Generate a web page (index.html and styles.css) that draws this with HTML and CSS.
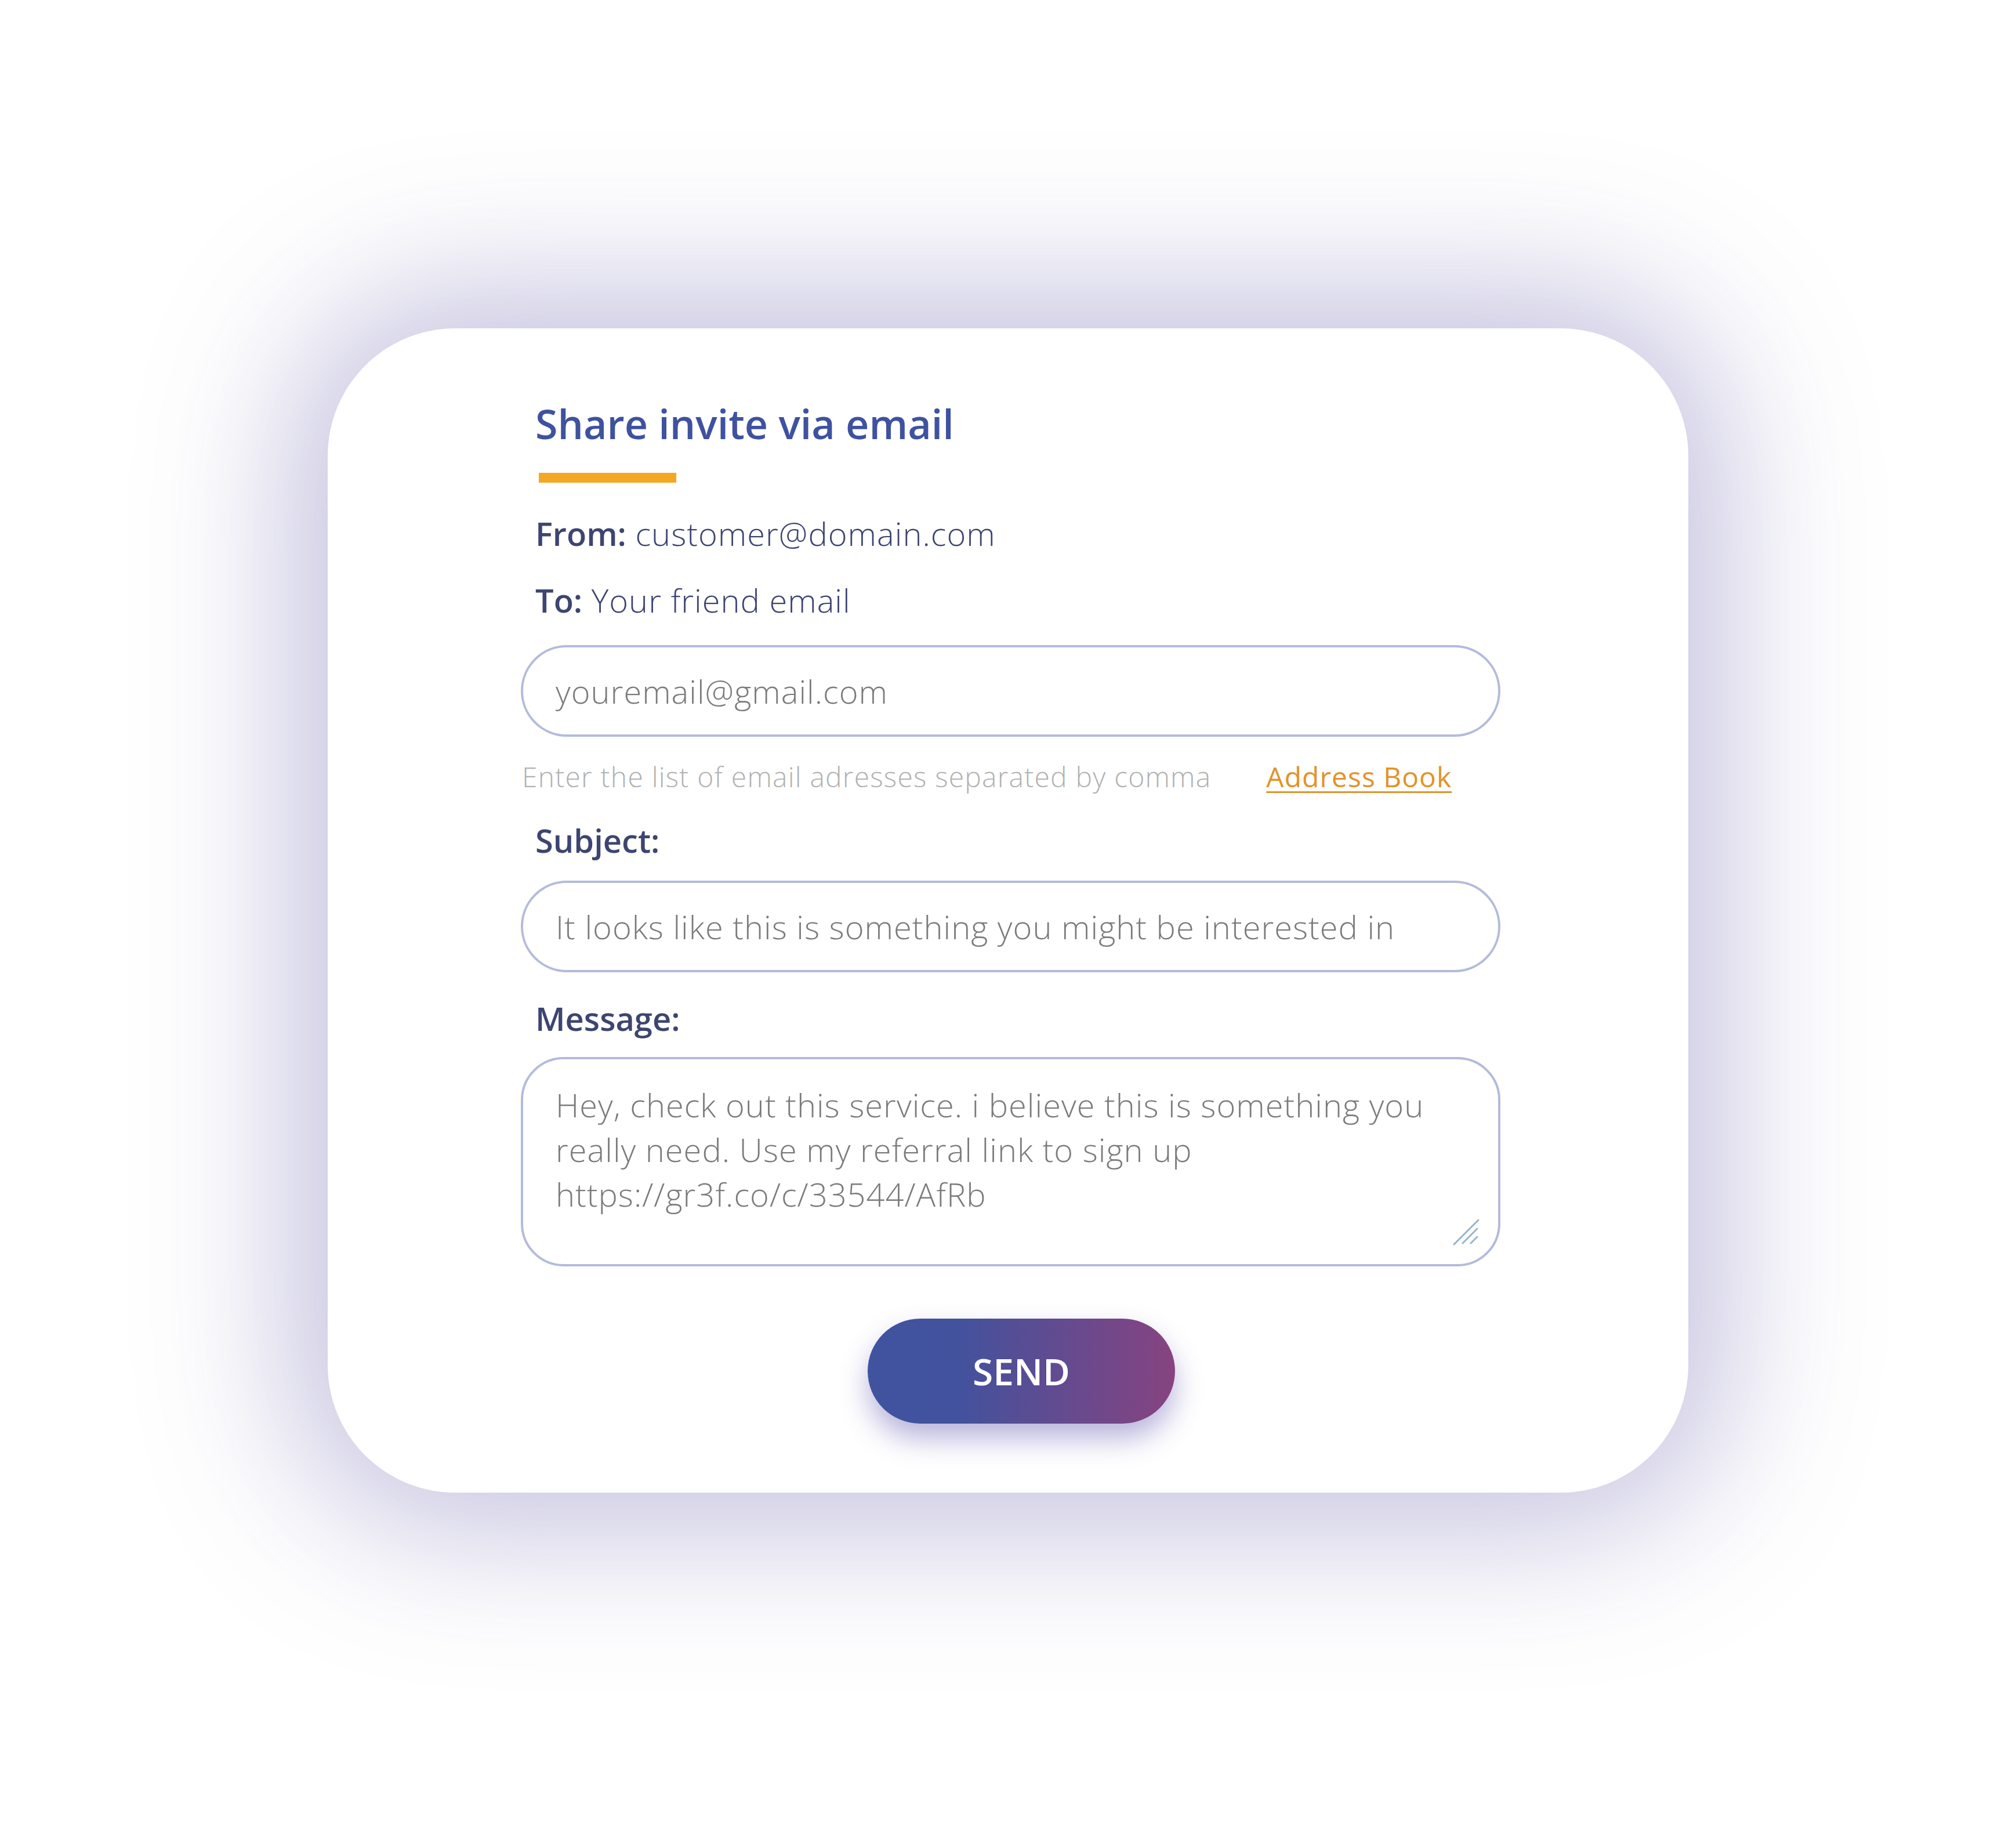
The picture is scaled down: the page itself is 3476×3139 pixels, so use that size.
FILE: index.html
```html
<!DOCTYPE html>
<html lang="en">
<head>
<meta charset="utf-8">
<title>Share invite via email</title>
<link rel="stylesheet" href="styles.css">
</head>
<body>
<main class="stage">
  <section class="card">
    <form class="form" onsubmit="return false">
      <h1 class="title">Share invite via email</h1>
      <div class="accent"></div>
      <p class="meta meta-from"><span class="meta-label">From:</span> customer@domain.com</p>
      <p class="meta meta-to"><span class="meta-label">To:</span> Your friend email</p>
      <input class="field field-to" type="text" placeholder="youremail@gmail.com">
      <div class="hint-row">
        <span class="hint">Enter the list of email adresses separated by comma</span>
        <a class="book-link" href="#">Address Book</a>
      </div>
      <label class="label label-subject">Subject:</label>
      <input class="field field-subject" type="text" value="It looks like this is something you might be interested in">
      <label class="label label-message">Message:</label>
      <div class="area-wrap">
        <textarea class="area">Hey, check out this service. i believe this is something you
really need. Use my referral link to sign up
https://gr3f.co/c/33544/AfRb</textarea>
        <svg class="grip" width="48" height="48" viewBox="0 0 48 48" aria-hidden="true">
          <line x1="2" y1="44" x2="44" y2="2"/>
          <line x1="17" y1="42" x2="42" y2="17"/>
          <line x1="31" y1="42" x2="42" y2="31"/>
        </svg>
      </div>
      <button class="send" type="submit">SEND</button>
    </form>
  </section>
</main>
</body>
</html>
```

FILE: styles.css
```css
html, body {
  margin: 0;
  padding: 0;
  background: #ffffff;
}

body {
  font-family: "Open Sans", "Noto Sans", "Liberation Sans", sans-serif;
}

.stage {
  min-height: 3139px;
  display: flex;
  align-items: center;
  justify-content: center;
}

.card {
  width: 2346px;
  box-sizing: border-box;
  padding: 129px 324px 119px 333px;
  background: #ffffff;
  border-radius: 220px;
  box-shadow: 0 0 420px 60px rgba(90, 80, 160, 0.36);
}

.form {
  display: flex;
  flex-direction: column;
  align-items: stretch;
}

.title {
  margin: 0 0 0 25px;
  font-size: 70px;
  line-height: 70px;
  font-weight: 600;
  color: #3f52a0;
}

.accent {
  margin: 50px 0 0 31px;
  width: 237px;
  height: 17px;
  background: #f5a623;
}

.meta {
  margin: 59px 0 0 25px;
  font-family: "Open Sans", "Noto Sans", sans-serif;
  font-size: 56px;
  line-height: 56px;
  font-weight: 300;
  letter-spacing: 1px;
  color: #3d4570;
}

.meta-label {
  font-weight: 600;
  letter-spacing: 0;
}

.field {
  box-sizing: border-box;
  width: 100%;
  height: 158px;
  margin: 0;
  padding: 0 56px;
  border: 4px solid #b4bbdb;
  border-radius: 79px;
  background: #ffffff;
  font-family: "Open Sans", "Noto Sans", sans-serif;
  font-size: 56px;
  font-weight: 300;
  letter-spacing: 1px;
  color: #7b7b7b;
  outline: none;
}

.field::placeholder {
  color: #7b7b7b;
  opacity: 1;
}

.field-to {
  margin-top: 50px;
}

.hint-row {
  display: flex;
  align-items: baseline;
  gap: 95px;
  margin: 45px 0 0 2px;
  font-size: 48px;
  line-height: 48px;
}

.hint {
  font-weight: 300;
  letter-spacing: 1.2px;
  color: #b1b1b1;
}

.book-link {
  font-weight: 400;
  letter-spacing: 1px;
  color: #e2932a;
  text-decoration: underline;
  text-decoration-thickness: 3px;
  text-underline-offset: 7px;
}

.label {
  display: block;
  margin-left: 25px;
  font-size: 56px;
  line-height: 56px;
  font-weight: 600;
  color: #3d4570;
}

.label-subject {
  margin-top: 57px;
}

.field-subject {
  margin-top: 42px;
}

.label-message {
  margin-top: 51px;
}

.area-wrap {
  position: relative;
  margin-top: 39px;
}

.area {
  display: block;
  box-sizing: border-box;
  width: 100%;
  height: 361px;
  margin: 0;
  padding: 40px 56px 0;
  border: 4px solid #b4bbdb;
  border-radius: 74px;
  background: #ffffff;
  font-family: "Open Sans", "Noto Sans", sans-serif;
  font-size: 56px;
  line-height: 77px;
  font-weight: 300;
  letter-spacing: 1px;
  color: #7b7b7b;
  resize: none;
  overflow: hidden;
  outline: none;
}

.grip {
  position: absolute;
  right: 34px;
  bottom: 34px;
  stroke: #98b3cc;
  stroke-width: 3;
  stroke-linecap: round;
}

.send {
  align-self: flex-start;
  margin: 90px 0 0 598px;
  width: 530px;
  height: 181px;
  border: none;
  border-radius: 91px;
  background: linear-gradient(90deg, #40539f 0%, #43529d 30%, #874380 100%);
  box-shadow: 0 26px 48px rgba(70, 60, 160, 0.38);
  color: #ffffff;
  font-family: "Open Sans", "Noto Sans", sans-serif;
  font-size: 64px;
  font-weight: 600;
  letter-spacing: 0;
  cursor: pointer;
}
```
